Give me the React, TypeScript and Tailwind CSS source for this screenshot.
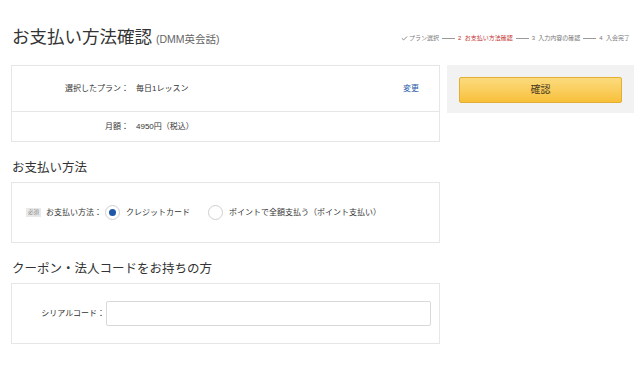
import { Check } from 'lucide-react'

const font = { fontFamily: '"Liberation Sans", "Noto Sans CJK JP", sans-serif' }

function Steps() {
  const line = <span className="mx-[3px] inline-block h-px w-[13px] bg-[#999]" />
  return (
    <div className="flex items-center text-[6px] text-[#777] pr-[4px]">
      <Check className="mr-[1px] h-[7px] w-[7px]" strokeWidth={3} />
      <span>プラン選択</span>
      {line}
      <span className="text-[#c43030]">2&nbsp;&nbsp;お支払い方法確認</span>
      {line}
      <span>3&nbsp;&nbsp;入力内容の確認</span>
      {line}
      <span>4&nbsp;&nbsp;入会完了</span>
    </div>
  )
}

function Radio({ checked, label }: { checked?: boolean; label: string }) {
  return (
    <label className="flex items-center">
      <span className="flex h-[15px] w-[15px] items-center justify-center rounded-full border border-[#cfcfcf] bg-white">
        {checked && <span className="h-[7px] w-[7px] rounded-full bg-[#1f58a8]" />}
      </span>
      <span className="ml-[6px]">{label}</span>
    </label>
  )
}

export default function App() {
  return (
    <div className="h-[366px] w-[640px] bg-white text-[#333]" style={font}>
      <div className="flex items-center justify-between pl-[12px] pr-[6px] pt-[27px]">
        <h1 className="flex items-baseline text-[17.5px] leading-[21px]">
          お支払い方法確認
          <span className="ml-[4px] text-[10.5px] text-[#666]">(DMM英会話)</span>
        </h1>
        <Steps />
      </div>

      <div className="mt-[15px] flex gap-[7px] pl-[11px] pr-[6px]">
        <div className="w-[429px]">
          <div className="border border-[#e6e6e6] text-[8px]">
            <div className="flex h-[46px] items-center border-b border-[#e6e6e6]">
              <div className="w-[117px] text-right">選択したプラン：</div>
              <div className="ml-[7px] flex-1">毎日1レッスン</div>
              <a className="mr-[20px] text-[#1f5ba8]">変更</a>
            </div>
            <div className="flex h-[29px] items-center">
              <div className="w-[117px] text-right">月額：</div>
              <div className="ml-[7px]">4950円（税込）</div>
            </div>
          </div>

          <h2 className="mb-[6px] mt-[18px] pl-[1px] text-[12.5px] leading-[16px]">お支払い方法</h2>
          <div className="flex h-[61px] items-center border border-[#e6e6e6] pl-[14px] text-[8px]">
            <span className="mr-[5px] bg-[#e9e9e9] px-[2px] py-[1px] text-[5.5px] leading-[7px] text-[#888]">必須</span>
            <span className="mr-[3px]">お支払い方法：</span>
            <Radio checked label="クレジットカード" />
            <div className="ml-[18px]">
              <Radio label="ポイントで全額支払う（ポイント支払い）" />
            </div>
          </div>

          <h2 className="mb-[6px] mt-[18px] pl-[1px] text-[12.5px] leading-[16px]">クーポン・法人コードをお持ちの方</h2>
          <div className="flex h-[61px] items-center border border-[#e6e6e6] pr-[8px] text-[8px]">
            <div className="w-[93px] text-right">シリアルコード：</div>
            <input className="ml-[1px] h-[25px] flex-1 rounded-[2px] border border-[#d9d9d9] outline-none" />
          </div>
        </div>

        <div className="h-[48px] w-[187px] bg-[#f2f2f2] px-[12px] pt-[11px]">
          <button className="h-[26px] w-full rounded-[2px] border border-[#e2ae33] bg-gradient-to-b from-[#fcdb7c] to-[#f8c038] text-[10px] text-[#4a3b1c]">
            確認
          </button>
        </div>
      </div>
    </div>
  )
}
